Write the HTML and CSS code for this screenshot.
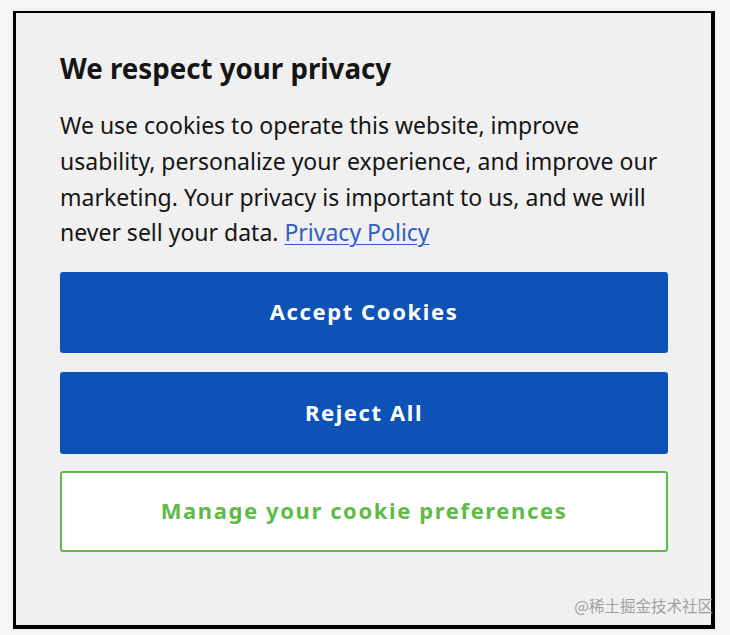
FILE: index.html
```html
<!DOCTYPE html>
<html lang="en">
<head>
<meta charset="utf-8">
<title>We respect your privacy</title>
<link rel="stylesheet" href="styles.css">
</head>
<body>
<div class="page">
  <div class="banner">
    <h2 class="title">We respect your privacy</h2>
    <p class="text">We use cookies to operate this website, improve usability, personalize your experience, and improve our marketing. Your privacy is important to us, and we will never sell your data. <a class="link" href="#">Privacy Policy</a></p>
    <div class="actions">
      <button class="btn btn-primary">Accept Cookies</button>
      <button class="btn btn-primary btn-tall">Reject All</button>
      <button class="btn btn-outline">Manage your cookie preferences</button>
    </div>
    <span class="watermark">@稀土掘金技术社区</span>
  </div>
</div>
</body>
</html>
```
FILE: styles.css
```css
* { box-sizing: border-box; }
html, body { margin: 0; padding: 0; }
body {
  background: #f7f7f7;
  font-family: "Noto Sans", "Liberation Sans", sans-serif;
  color: #151515;
}
.page {
  padding: 11px 0 0 13px;
  width: 730px;
  height: 635px;
}
.banner {
  position: relative;
  width: 702px;
  height: 618px;
  background: #f0f0f0;
  border-style: solid;
  border-color: #000;
  border-width: 2px 4px 4px 3px;
  padding: 37px 43px 0 44px;
  box-shadow: 0 0 8px rgba(0,0,0,0.06);
}
.title {
  margin: 0;
  font-size: 27.7px;
  line-height: 36px;
  font-weight: 700;
  letter-spacing: 0;
}
.text {
  margin: 22px 0 0;
  font-size: 23px;
  line-height: 35.8px;
  font-weight: 400;
}
.link {
  color: #2d5fc2;
  text-decoration: underline;
  text-underline-offset: 3px;
  text-decoration-thickness: 1px;
}
.actions {
  margin-top: 21px;
  display: flex;
  flex-direction: column;
  gap: 19px;
}
.btn {
  display: block;
  width: 100%;
  height: 81px;
  padding: 0 0 3px;
  border-radius: 3px;
  font-family: "Noto Sans", "Liberation Sans", sans-serif;
  font-size: 22px;
  font-weight: 700;
  letter-spacing: 1.6px;
  cursor: pointer;
}
.btn-tall { height: 82px; margin-bottom: -2px; }
.btn-primary {
  background: #0d52b7;
  border: none;
  color: #fff;
}
.btn-outline {
  background: #fff;
  border: 2px solid #5fba47;
  color: #5fba47;
}
.watermark {
  position: absolute;
  right: -2px;
  bottom: 9px;
  font-family: "Noto Sans CJK SC", sans-serif;
  font-size: 15.5px;
  color: #a0a0a0;
}
```
